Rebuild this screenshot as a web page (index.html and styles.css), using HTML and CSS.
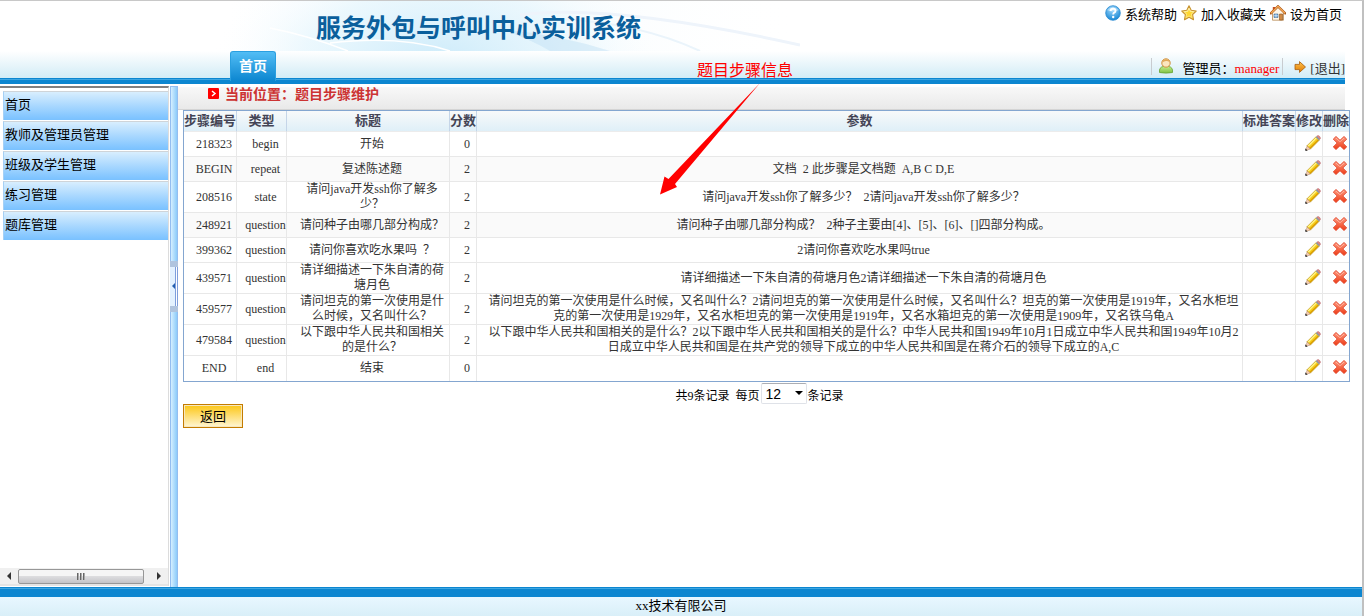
FILE: index.html
```html
<!DOCTYPE html>
<html lang="zh-CN">
<head>
<meta charset="utf-8">
<title>服务外包与呼叫中心实训系统</title>
<link rel="stylesheet" href="styles.css">
</head>
<body>
<svg class="defs" aria-hidden="true">
  <defs>
    <linearGradient id="gCross" x1="0" y1="0" x2="0" y2="1"><stop offset="0" stop-color="#ff9a80"/><stop offset="1" stop-color="#ee3a14"/></linearGradient>
    <radialGradient id="gHelp" cx=".45" cy=".25" r=".75"><stop offset="0" stop-color="#a5dcff"/><stop offset="1" stop-color="#1787d4"/></radialGradient>
    <linearGradient id="gStar" x1="0" y1="0" x2="0" y2="1"><stop offset="0" stop-color="#fffbd0"/><stop offset="1" stop-color="#ffe05a"/></linearGradient>
    <linearGradient id="gOrange" x1="0" y1="0" x2="0" y2="1"><stop offset="0" stop-color="#ffc24d"/><stop offset="1" stop-color="#e07b00"/></linearGradient>
    <linearGradient id="gGreen" x1="0" y1="0" x2="0" y2="1"><stop offset="0" stop-color="#c5ec8a"/><stop offset="1" stop-color="#7cc142"/></linearGradient>
  </defs>
  <symbol id="pencil" viewBox="0 0 16 16">
    <path d="M2 10.800L11 1.800l3.300 3.300-9 9z" fill="#f7cf1c" stroke="#b58a10" stroke-width=".8"/>
    <path d="M3.200 11L11.400 2.800" stroke="#fff48c" stroke-width="1.400"/>
    <path d="M5 13.200L13.300 4.900" stroke="#dc9c00" stroke-width="1.200"/>
    <path d="M.9 15.200l1.200-4.300 3.200 3.200z" fill="#f6cdb0" stroke="#b08058" stroke-width=".5"/>
    <path d="M.3 15.700v-2.400l2.400 2.400z" fill="#222"/>
    <path d="M10.700 2.200l1.100-1.100 3.200 3.200-1.100 1.100z" fill="#8f9aa8"/>
    <path d="M11.900 1.100q1.200-1.200 2.700.3 1.500 1.700.4 2.800z" fill="#e88a88" stroke="#a85a60" stroke-width=".5"/>
  </symbol>
  <symbol id="cross" viewBox="0 0 16 16">
    <path d="M4 1.500L8 5.300l4-3.800 2.700 2.600L10.800 8l3.900 3.900-2.700 2.600L8 10.700l-4 3.800-2.700-2.600L5.200 8 1.300 4.100z" fill="url(#gCross)" stroke="#e0452a" stroke-width=".9" stroke-linejoin="round"/>
    <path d="M3.900 3L8 6.700 12.100 3" fill="none" stroke="#ffc0ae" stroke-width=".8"/>
  </symbol>
  <symbol id="help" viewBox="0 0 16 16">
    <circle cx="8" cy="8" r="7.300" fill="url(#gHelp)" stroke="#2a8ad0" stroke-width=".8"/>
    <path d="M2 5q6-5.500 12 0-6 3-12 0z" fill="#d9f1ff" opacity=".5"/>
    <path d="M5.600 6q.2-2.300 2.500-2.300t2.400 2q0 1.300-1.300 2Q8.200 8.200 8.200 9.500" fill="none" stroke="#fff" stroke-width="1.900"/>
    <circle cx="8.200" cy="12" r="1.200" fill="#fff"/>
  </symbol>
  <symbol id="star" viewBox="0 0 16 16">
    <path d="M8 .8l2.200 4.500 5 .7-3.600 3.500.9 5.200L8 12.300l-4.500 2.400.9-5.200L.8 6l5-.7z" fill="url(#gStar)" stroke="#c8932e" stroke-width="1.100" stroke-linejoin="round"/>
    <path d="M8 4.200l1.200 2.500 2.800.4-2 2 .5 2.700L8 10.500l-2.500 1.300.5-2.700-2-2 2.800-.4z" fill="#ffd21a" opacity=".8"/>
  </symbol>
  <symbol id="home" viewBox="0 0 16 16">
    <path d="M2.800 2h2.400v4H2.800z" fill="#c84f20"/>
    <path d="M2.500 7.500L8 2.500l5.500 5v7.700h-11z" fill="#fff6e6" stroke="#b98a55" stroke-width=".8"/>
    <path d="M.8 8.400L8 1.300l7.200 7.100" fill="none" stroke="#a8561a" stroke-width="2.300" stroke-linecap="round"/>
    <path d="M1 8.200L8 1.400l7 6.800" fill="none" stroke="#f9ac58" stroke-width="1.200"/>
    <path d="M4 9h4v3.500H4z" fill="#6aa9e0" stroke="#47698c" stroke-width=".6"/>
    <path d="M6 9v3.500M4 10.700h4" stroke="#fff" stroke-width=".5"/>
    <path d="M9.500 9h3v6h-3z" fill="#d08a46" stroke="#8a4d18" stroke-width=".6"/>
  </symbol>
  <symbol id="user" viewBox="0 0 16 16">
    <path d="M1.500 14.500q-.6-5.500 4-6h5q4.600.5 4 6-6.500 1.200-13 0z" fill="url(#gGreen)" stroke="#6ba83a" stroke-width=".9"/>
    <circle cx="8" cy="5" r="4.200" fill="#fbe6bf" stroke="#d08f3c" stroke-width="1"/>
    <path d="M4.200 4.400Q4.600 1.200 8 1.200t3.800 3.200Q10 2.900 8 3.100T4.200 4.400z" fill="#e0a858"/>
  </symbol>
  <symbol id="exit" viewBox="0 0 12 12">
    <path d="M1 3.400h4.500V.6L11.500 6l-6 5.400V8.600H1z" fill="url(#gOrange)" stroke="#a85d0c" stroke-width=".8" stroke-linejoin="round"/>
  </symbol>
</svg>

<header class="header">
  <div class="banner">
    <svg class="banner-art" viewBox="0 0 800 50" aria-hidden="true">
      <defs>
        <radialGradient id="glow" cx="440" cy="60" r="230" gradientUnits="userSpaceOnUse" gradientTransform="matrix(1 0 0 .5 0 30)"><stop offset="0" stop-color="#cdebfa"/><stop offset=".6" stop-color="#e6f6fd" stop-opacity=".7"/><stop offset="1" stop-color="#fff" stop-opacity="0"/></radialGradient>
        <linearGradient id="haze" x1="230" x2="800" y1="0" y2="0" gradientUnits="userSpaceOnUse"><stop offset="0" stop-color="#f3fafe" stop-opacity="0"/><stop offset=".4" stop-color="#f0f9fd"/><stop offset="1" stop-color="#fff" stop-opacity="0"/></linearGradient>
      </defs>
      <path d="M220 0h580v50H220z" fill="url(#haze)"/>
      <path d="M210 0h460v50H210z" fill="url(#glow)"/>
      <path d="M500 28q60 6 110 22h-60q-20-12-50-22z" fill="#b9dcf2" opacity=".4"/>
      <path d="M520 14q90-12 280 30" fill="none" stroke="#eef4fb" stroke-width="3"/>
      <path d="M560 18q80 4 140 32" fill="none" stroke="#eaf4fb" stroke-width="2"/>
      <path d="M270 27q40 8 78 23M330 42q70-8 120 8" fill="none" stroke="#fff" stroke-width="1.500"/>
    </svg>
    <h1 class="title">服务外包与呼叫中心实训系统</h1>
    <nav class="quick">
      <a href="#"><svg class="icon"><use href="#help"/></svg>系统帮助</a>
      <a href="#"><svg class="icon"><use href="#star"/></svg>加入收藏夹</a>
      <a href="#"><svg class="icon"><use href="#home"/></svg>设为首页</a>
    </nav>
  </div>
  <div class="navbar">
    <a class="tab" href="#">首页</a>
    <div class="account">
      <span class="who"><svg class="icon"><use href="#user"/></svg><span>管理员：<b class="name">manager</b></span></span>
      <a class="logout" href="#"><svg class="icon-small"><use href="#exit"/></svg>[退出]</a>
    </div>
  </div>
</header>

<div class="main">
  <aside class="sidebar">
    <nav class="menu">
      <a href="#">首页</a>
      <a href="#">教师及管理员管理</a>
      <a href="#">班级及学生管理</a>
      <a href="#">练习管理</a>
      <a href="#">题库管理</a>
    </nav>
    <div class="scrollbar" aria-hidden="true">
      <span class="arrow arrow-left"></span>
      <span class="thumb"><i></i><i></i><i></i></span>
      <span class="arrow arrow-right"></span>
    </div>
  </aside>
  <div class="splitter"><button class="collapse" type="button" aria-label="收起菜单"></button></div>

  <main class="content">
    <div class="crumb">
      <svg class="crumb-icon" viewBox="0 0 11 11" aria-hidden="true"><rect width="11" height="11" rx="1" fill="#f00"/><path d="M4 3l3 2.500L4 8" fill="none" stroke="#fff" stroke-width="1.500"/></svg>
      当前位置：题目步骤维护
    </div>
    <table class="steps">
      <colgroup><col class="c-id"><col class="c-type"><col class="c-title"><col class="c-act"><col><col class="c-id"><col class="c-act"><col class="c-last"></colgroup>
      <thead><tr><th>步骤编号</th><th>类型</th><th>标题</th><th>分数</th><th>参数</th><th>标准答案</th><th>修改</th><th>删除</th></tr></thead>
      <tbody>
        <tr><td>218323</td><td>begin</td><td>开始</td><td>0</td><td></td><td></td><td><a href="#" aria-label="修改"><svg class="icon"><use href="#pencil"/></svg></a></td><td><a href="#" aria-label="删除"><svg class="icon"><use href="#cross"/></svg></a></td></tr>
        <tr class="alt"><td>BEGIN</td><td>repeat</td><td>复述陈述题</td><td>2</td><td>文档&nbsp; 2 此步骤是文档题&nbsp; A,B C D,E</td><td></td><td><a href="#" aria-label="修改"><svg class="icon"><use href="#pencil"/></svg></a></td><td><a href="#" aria-label="删除"><svg class="icon"><use href="#cross"/></svg></a></td></tr>
        <tr><td>208516</td><td>state</td><td>请问java开发ssh你了解多少？</td><td>2</td><td>请问java开发ssh你了解多少？&nbsp; 2请问java开发ssh你了解多少？</td><td></td><td><a href="#" aria-label="修改"><svg class="icon"><use href="#pencil"/></svg></a></td><td><a href="#" aria-label="删除"><svg class="icon"><use href="#cross"/></svg></a></td></tr>
        <tr class="alt"><td>248921</td><td>question</td><td>请问种子由哪几部分构成？</td><td>2</td><td>请问种子由哪几部分构成？&nbsp; 2种子主要由[4]、[5]、[6]、[]四部分构成。</td><td></td><td><a href="#" aria-label="修改"><svg class="icon"><use href="#pencil"/></svg></a></td><td><a href="#" aria-label="删除"><svg class="icon"><use href="#cross"/></svg></a></td></tr>
        <tr><td>399362</td><td>question</td><td>请问你喜欢吃水果吗&nbsp; ？</td><td>2</td><td>2请问你喜欢吃水果吗true</td><td></td><td><a href="#" aria-label="修改"><svg class="icon"><use href="#pencil"/></svg></a></td><td><a href="#" aria-label="删除"><svg class="icon"><use href="#cross"/></svg></a></td></tr>
        <tr><td>439571</td><td>question</td><td>请详细描述一下朱自清的荷塘月色</td><td>2</td><td>请详细描述一下朱自清的荷塘月色2请详细描述一下朱自清的荷塘月色</td><td></td><td><a href="#" aria-label="修改"><svg class="icon"><use href="#pencil"/></svg></a></td><td><a href="#" aria-label="删除"><svg class="icon"><use href="#cross"/></svg></a></td></tr>
        <tr><td>459577</td><td>question</td><td>请问坦克的第一次使用是什么时候，又名叫什么？</td><td>2</td><td>请问坦克的第一次使用是什么时候，又名叫什么？2请问坦克的第一次使用是什么时候，又名叫什么？坦克的第一次使用是1919年，又名水柜坦克的第一次使用是1929年，又名水柜坦克的第一次使用是1919年，又名水箱坦克的第一次使用是1909年，又名铁乌龟A</td><td></td><td><a href="#" aria-label="修改"><svg class="icon"><use href="#pencil"/></svg></a></td><td><a href="#" aria-label="删除"><svg class="icon"><use href="#cross"/></svg></a></td></tr>
        <tr><td>479584</td><td>question</td><td>以下跟中华人民共和国相关的是什么？</td><td>2</td><td>以下跟中华人民共和国相关的是什么？2以下跟中华人民共和国相关的是什么？中华人民共和国1949年10月1日成立中华人民共和国1949年10月2日成立中华人民共和国是在共产党的领导下成立的中华人民共和国是在蒋介石的领导下成立的A,C</td><td></td><td><a href="#" aria-label="修改"><svg class="icon"><use href="#pencil"/></svg></a></td><td><a href="#" aria-label="删除"><svg class="icon"><use href="#cross"/></svg></a></td></tr>
        <tr><td>END</td><td>end</td><td>结束</td><td>0</td><td></td><td></td><td><a href="#" aria-label="修改"><svg class="icon"><use href="#pencil"/></svg></a></td><td><a href="#" aria-label="删除"><svg class="icon"><use href="#cross"/></svg></a></td></tr>
      </tbody>
    </table>
    <div class="pager">
      <label for="size">共9条记录&nbsp; 每页</label>
      <span class="select"><select id="size"><option>12</option><option>24</option></select></span>
      <span>条记录</span>
    </div>
    <button class="back" type="button">返回</button>
  </main>
</div>

<footer class="footer">xx技术有限公司</footer>

<div class="note">
  <span>题目步骤信息</span>
  <svg class="note-arrow" viewBox="0 0 104 114" aria-hidden="true"><path d="M100 0L15 101l2 3L0 111.500 4.500 93.500l4 2.500z" fill="red"/></svg>
</div>
</body>
</html>
```

FILE: styles.css
```css
* { box-sizing: border-box; }
html, body { height: 100%; }
body {
  margin: 0;
  display: flex;
  flex-direction: column;
  position: relative;
  border-top: 1px solid #c8c8c8;
  border-right: 2px solid #c0c0c0;
  background: #fff;
  color: #000;
  font: 13px/18px "Liberation Serif", "Noto Sans CJK SC", serif;
}
a { color: inherit; text-decoration: none; }
.defs { position: absolute; width: 0; height: 0; }
.icon { width: 16px; height: 16px; display: block; flex: none; }
.icon-small { width: 12px; height: 12px; flex: none; }

.header { flex: none; }
.banner {
  position: relative;
  display: flex;
  justify-content: space-between;
  align-items: flex-start;
  height: 50px;
  padding: 0 20px 0 316px;
}
.banner-art { position: absolute; left: 0; top: 0; width: 800px; height: 50px; }
.title {
  position: relative;
  margin: 0;
  color: #0a5f9c;
  font: bold 25px/50px "Noto Sans CJK SC", sans-serif;
}
.quick { position: relative; display: flex; gap: 4px; padding-top: 4px; }
.quick a { display: flex; gap: 4px; line-height: 20px; }
.navbar {
  display: flex;
  justify-content: space-between;
  height: 33px;
  margin-right: 17px;
  padding-left: 230px;
  background: linear-gradient(#fff, #d2ecf6 27px, #0c86d0 27px 28px, #3ea6e2 28px 29px, #0c86d0 29px);
}
.tab {
  width: 46px;
  height: 30px;
  border: 1px solid #2a9fe0;
  border-bottom: 0;
  border-radius: 3px 3px 0 0;
  background: linear-gradient(#52bdf5, #0c86d0);
  color: #fff;
  font-size: 14px;
  font-weight: bold;
  line-height: 29px;
  text-align: center;
}
.account { display: flex; align-items: flex-start; padding-top: 7px; }
.who {
  display: flex;
  gap: 9px;
  height: 17px;
  padding: 0 3px 0 6px;
  border: solid #c8ccd0;
  border-width: 0 1px;
}
.who span { line-height: 22px; }
.name { color: #f00; font-weight: normal; }
.logout { display: flex; gap: 4px; padding-left: 11px; color: #333; line-height: 22px; }
.logout svg { margin-top: 3px; }

.main { flex: 1; display: flex; min-height: 0; }
.sidebar {
  flex: none;
  display: flex;
  flex-direction: column;
  justify-content: space-between;
  width: 169px;
  margin: 2px 1px 1px 0;
  border-top: 2px solid #808080;
  border-right: 1px solid #dcdcdc;
}
.menu { display: grid; gap: 1px; padding: 3px 0 0 3px; }
.menu a {
  height: 29px;
  padding-left: 1px;
  border-top: 1px solid #cfd4d8;
  border-left: 1px solid #a5d0f5;
  background: linear-gradient(#d8eefe, #79c1ff);
  line-height: 26px;
}
.scrollbar {
  display: flex;
  align-items: center;
  height: 18px;
  border-bottom: 2px solid #e4e4e4;
  background: #f0f0f0;
}
.arrow { display: flex; width: 18px; justify-content: center; }
.arrow::before { content: ""; border: solid transparent; border-width: 4px; }
.arrow-left::before { border-right-color: #333; border-left: 0; }
.arrow-right::before { border-left-color: #333; border-right: 0; }
.arrow-right { margin-left: auto; }
.thumb {
  display: flex;
  justify-content: center;
  align-items: center;
  gap: 1px;
  width: 126px;
  height: 15px;
  border: 1px solid #979797;
  border-radius: 2px;
  background: linear-gradient(#f5f5f5 0 45%, #dcdcde 50%, #c4c4c8);
}
.thumb i { width: 2px; height: 7px; background: linear-gradient(90deg, #666 50%, #aaa 50%); }
.splitter {
  flex: none;
  display: flex;
  align-items: center;
  width: 8px;
  margin-top: 2px;
  padding-bottom: 102px;
  border: 1px solid #94bdf0;
  border-bottom: 0;
  background: linear-gradient(90deg, #d5efff, #8ccbf9);
}
.collapse {
  display: flex;
  align-items: center;
  justify-content: center;
  flex: none;
  width: 8px;
  height: 51px;
  margin: 0 -1px;
  padding: 0 2px 0 0;
  border: solid #b0c4de;
  border-width: 6px 0;
  background: linear-gradient(90deg, #e4f2ff 5px, #7f9fdc 5px 6px, #fff 6px 7px, #7f9fdc 7px);
}
.collapse::before { content: ""; border: 3px solid transparent; border-left: 0; border-right-color: #2560b0; }

.content { flex: 1; min-width: 0; padding: 3px 0 0; }
.crumb {
  display: flex;
  gap: 6px;
  height: 23px;
  margin-right: 17px;
  padding: 1px 0 0 30px;
  border-bottom: 1px solid #d4d4d4;
  background: linear-gradient(#f8f8f8, #e9e9e9);
  color: #c33;
  font-size: 14px;
  font-weight: bold;
  line-height: 14px;
}
.crumb-icon { width: 11px; height: 11px; }
.steps {
  table-layout: fixed;
  width: calc(100% - 17px);
  margin-left: 5px;
  border: 1px solid #84a6d0;
  border-spacing: 0;
  color: #333;
  font-size: 12px;
  line-height: 15px;
}
.c-id { width: 53px; }
.c-type { width: 50px; }
.c-title { width: 163px; }
.c-act { width: 27px; }
.c-last { width: 26px; }
.steps th {
  height: 21px;
  padding: 0 0 2px;
  border-right: 1px solid #c5d5e8;
  border-bottom: 1px solid #ececec;
  background: linear-gradient(#f8f9fa, #dfeff8);
  color: #444455;
  font-size: 13px;
  white-space: nowrap;
}
.steps td {
  height: 25px;
  padding: 0 0 0 8px;
  border-right: 1px solid #e8e8e8;
  border-bottom: 1px solid #e8e8e8;
  text-align: center;
}
.steps tr > :last-child { border-right: 0; }
.steps tbody tr:last-child td { border-bottom: 0; }
.steps .alt td { background: #fafafa; }
.steps td:nth-last-child(-n+2) { padding-bottom: 3px; }
.steps td .icon { margin: 0 auto; }
.pager {
  display: flex;
  justify-content: center;
  height: 22px;
  margin-right: 21px;
  font-size: 12px;
  line-height: 28px;
}
.select { position: relative; height: 21px; display: flex; margin: 1px 1px 0; }
.select select {
  appearance: none;
  width: 46px;
  height: 21px;
  padding: 0 0 0 4px;
  border: 1px solid #dfe2e8;
  border-top-color: #abadb3;
  border-radius: 2px;
  background: #fff;
  color: #000;
  font: 14px/18px "Liberation Sans", sans-serif;
}
.select::after {
  content: "";
  position: absolute;
  right: 4px;
  top: 8px;
  border: 4px solid transparent;
  border-top-color: #000;
  border-bottom: 0;
  pointer-events: none;
}
.back {
  display: block;
  width: 60px;
  height: 24px;
  margin-left: 5px;
  padding: 0;
  border: 1px solid #c47c00;
  background: linear-gradient(#fcc614, #fff6d4);
  box-shadow: inset 0 0 0 1px #f6e7c0;
  color: #000;
  font: 13px/20px "Noto Sans CJK SC", sans-serif;
}

.footer {
  flex: none;
  height: 29px;
  background: linear-gradient(#0c86d0 0 1px, #3ea6e2 1px 2px, #0c86d0 2px 10px, #e8f7ff 10px, #d9eff8);
  padding-top: 10px;
  line-height: 17px;
  text-align: center;
}

.note {
  position: absolute;
  left: 660px;
  top: 58px;
  color: #f00;
  font-size: 16px;
  line-height: 24px;
  pointer-events: none;
}
.note span { display: block; padding-left: 37px; }
.note-arrow { display: block; width: 104px; height: 114px; }
```
